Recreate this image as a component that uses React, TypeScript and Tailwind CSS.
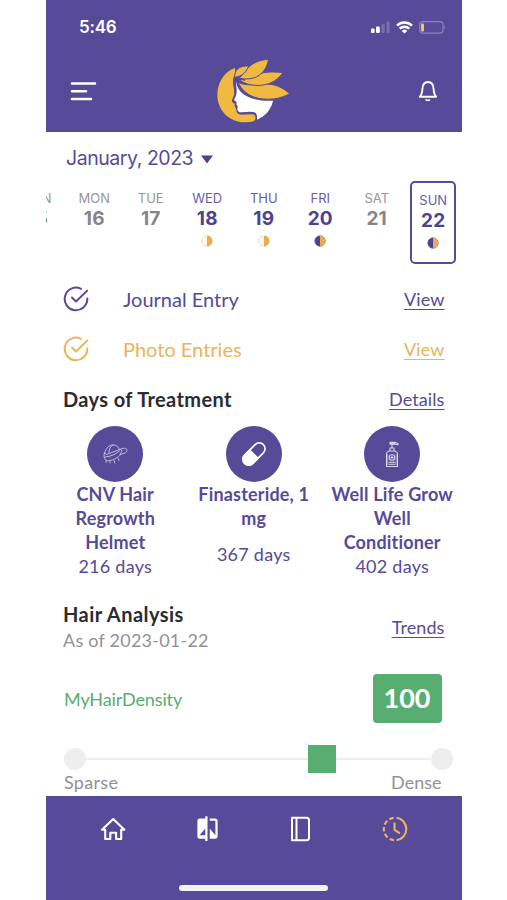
import { MdCompare } from 'react-icons/md';
import clsx from 'clsx';

type Moon = 'half' | 'full';

interface Day {
  name: string;
  date: number;
  moon?: Moon;
  selected?: boolean;
}

const days: Day[] = [
  { name: 'SUN', date: 15 },
  { name: 'MON', date: 16 },
  { name: 'TUE', date: 17 },
  { name: 'WED', date: 18, moon: 'half' },
  { name: 'THU', date: 19, moon: 'half' },
  { name: 'FRI', date: 20, moon: 'full' },
  { name: 'SAT', date: 21 },
  { name: 'SUN', date: 22, moon: 'full', selected: true },
];

function StatusBar() {
  return (
    <div className="flex h-[54px] items-center justify-between pl-[33px] pr-[16px]">
      <span className="font-['Inter',sans-serif] text-[17px] font-semibold leading-none tracking-[-0.2px]">5:46</span>
      <div className="flex items-center gap-[6px]">
        <svg width="19" height="12" viewBox="0 0 19 12" fill="white">
          <rect x="0" y="7.5" width="3.6" height="4.5" rx="1" />
          <rect x="5" y="5.5" width="3.8" height="6.5" rx="1" />
          <rect x="10.5" y="3" width="3.2" height="9" rx="1" opacity="0.2" />
          <rect x="15.5" y="0.5" width="3.2" height="11.5" rx="1" opacity="0.2" />
        </svg>
        <svg width="17" height="13" viewBox="0 0 17 13" fill="none" stroke="white" strokeWidth="2.4">
          <path d="M1 4.6a10.6 10.6 0 0 1 15 0" />
          <path d="M3.7 7.7a6.8 6.8 0 0 1 9.6 0" />
          <path d="M8.5 12.6 5.8 9.9a3.8 3.8 0 0 1 5.4 0z" fill="white" stroke="none" />
        </svg>
        <svg width="27" height="13" viewBox="0 0 27 13" fill="none">
          <rect x="0.6" y="0.6" width="23.4" height="11.6" rx="3" stroke="#8d80bd" strokeWidth="1.2" />
          <rect x="2" y="2.4" width="3" height="8" rx="1" fill="#f3cb4f" />
          <path d="M25.2 4.5q2 2 0 4z" fill="#8d80bd" />
        </svg>
      </div>
    </div>
  );
}

function Logo() {
  return (
    <svg width="90" height="80" viewBox="0 0 270 240">
      <path
        fill="#f0b940"
        d="M75 54C40 66 22 101 22 135c0 46 37 82 81 82 12 0 21-1 29-4 6-4 6-14 1-19-11-3-26 0-40 0-12-1-14-8-14-16l-5-9 0-8c-8-3-10-7-7-13l5-13c3-16-4-28-3-43 0-13 10-17 6-38z"
      />
      <path
        fill="#fff"
        d="M77 93c2 16 5 32 1 44l-6 13 8 6-1 7 4 6-1 7c1 8 5 11 12 11 15-1 28-4 39 0 8 3 9 13 8 22 25-10 43-32 48-57-36 2-76-5-97-27-10-11-12-22-15-32z"
      />
      <g fill="#f0b940" stroke="#574a98" strokeWidth="3" strokeLinejoin="round">
        <path d="M84 97c26 12 47 6 78 5 35-1 58 12 77 29-27 16-62 20-93 14-33-7-52-26-62-48z" />
        <path d="M88 90c35-2 52-32 131-22-19 28-52 41-84 38-19-2-33-6-47-16z" />
        <path d="M88 84c20-19 29-52 88-56-6 32-27 56-57 58-12 1-22 2-31-2z" />
        <path d="M74 82c-1-22 14-36 42-34-6 17-18 31-42 34z" />
      </g>
      <path fill="none" stroke="#574a98" strokeWidth="3.5" strokeLinecap="round" d="M73 85c12-3 20 0 30 6M74 90c8 3 14 4 20 7" />
    </svg>
  );
}

function Header() {
  return (
    <header className="h-[132px] shrink-0 bg-[#574a98] text-white">
      <StatusBar />
      <div className="-mt-1 flex items-start justify-between pl-6 pr-[23px]">
        <svg className="mt-8" width="27" height="20" viewBox="0 0 27 20" stroke="white" strokeWidth="2.5" strokeLinecap="round">
          <path d="M2 1.6h23M2 9.2h14M2 17.1h19" />
        </svg>
        <div className="-ml-[3px]">
          <Logo />
        </div>
        <svg className="mt-[30px]" width="22" height="23" viewBox="0 0 22 23" fill="none" stroke="white" strokeWidth="1.9" strokeLinejoin="round" strokeLinecap="round">
          <path d="M2.8 16.7c2-2 2.4-4.2 2.6-7.7C5.6 4.8 7.7 2 11 2s5.4 2.8 5.6 7c.2 3.5.6 5.7 2.6 7.7z" />
          <path d="M8.9 20h4.2q-2.1 1.6-4.2 0z" fill="white" strokeWidth="1" />
        </svg>
      </div>
    </header>
  );
}

function MoonIcon({ type }: { type: Moon }) {
  return (
    <svg width="12" height="12" viewBox="0 0 12 12">
      <circle cx="6" cy="6" r="5.2" fill={type === 'full' ? '#4f4192' : '#fffaf0'} stroke={type === 'full' ? '#6c5c96' : '#f3d59f'} strokeWidth="0.8" />
      <path d="M6 .6a5.4 5.4 0 0 1 0 10.8z" fill="#e9ad51" />
    </svg>
  );
}

function Calendar() {
  return (
    <div className="font-['Inter',sans-serif]">
      <div className="flex h-[49px] items-center gap-2 pl-[20px] pt-[5px] text-[#574a98]">
        <span className="text-[19.5px] leading-none tracking-[-0.45px]">January, 2023</span>
        <svg width="12" height="9" viewBox="0 0 12 9" fill="#4f4192">
          <path d="M0 .5h12L6 8.5z" />
        </svg>
      </div>
      <div className="flex h-[84px] justify-end overflow-hidden">
        {days.map((day) => (
          <div key={day.date} className="flex w-[56.5px] shrink-0 justify-center">
            <div
              className={clsx(
                'flex flex-col items-center',
                day.selected ? 'h-[83px] w-[46px] rounded-[5px] border-2 border-[#574a98] pt-[10px]' : 'pt-[10px]',
                day.moon ? 'text-[#4f4192]' : 'text-[#858585]',
              )}
            >
              <span className="text-[13px] leading-[14px] opacity-85">{day.name}</span>
              <span className="mt-[4px] text-[19px] font-bold leading-[20px] tracking-[0.2px]">{day.date}</span>
              {day.moon && <div className="mt-[6px]"><MoonIcon type={day.moon} /></div>}
            </div>
          </div>
        ))}
      </div>
    </div>
  );
}

function Link({ children }: { children: string }) {
  return <a className="pt-px text-[18px] tracking-[0.1px] underline decoration-1 underline-offset-[3px]">{children}</a>;
}

function EntryRow({ label, className }: { label: string; className: string }) {
  return (
    <div className={clsx('flex h-[50px] items-center pl-[17px] pr-[17px]', className)}>
      <svg width="26" height="26" viewBox="0 0 26 26" fill="none" stroke="currentColor" strokeWidth="2" strokeLinecap="round" strokeLinejoin="round">
        <path d="M18 2.8A11.3 11.3 0 1 0 24.3 12.5" />
        <path d="M9 11.5l4 4L24.2 4.6" />
      </svg>
      <span className="ml-[34px] flex-1 text-[20px]">{label}</span>
      <Link>View</Link>
    </div>
  );
}

function HelmetIcon() {
  return (
    <svg width="26" height="22" viewBox="0 0 26 22" fill="none" stroke="#cdc6e4" strokeWidth="0.9" strokeLinecap="round" strokeLinejoin="round">
      <path d="M2.5 10C4 5 7 2 11 2c4 0 5.500 2 6.500 4.500M2.500 10l2 1.500 13-5 4-1.200c3-.3 4 1.200 3 3.200-1 2-4 2-6 3" />
      <path d="M2.5 10c-1 2-.5 5 1 7 2 1.500 6 .5 9-1 3-1.500 5.500-3 6-5M3.500 14c5-.5 10-2.500 14-6" />
      <path d="M7 9.5C7 6 8 3.500 11 2M19 6.500c1.500 1 1 3-.5 4" />
      <path d="M4 18v1.500M8 18.500v1.500M12 17.500l.8 2.500M16 15l1 2.500" />
    </svg>
  );
}

function PillIcon() {
  return (
    <svg width="28" height="28" viewBox="0 0 28 28">
      <g transform="rotate(45 14 14)">
        <rect x="8.2" y="0.8" width="11.6" height="26.4" rx="5.8" fill="none" stroke="white" strokeWidth="1.7" />
        <path d="M7.4 13.5h13.200v7.900a6.600 6.600 0 0 1-13.200 0z" fill="white" />
      </g>
    </svg>
  );
}

function BottleIcon() {
  return (
    <svg width="14" height="28" viewBox="0 0 14 28" fill="none" stroke="#dcd6ec" strokeWidth="1.1" strokeLinejoin="round">
      <path d="M5 2.200h5l3 1.500v1l-3-.5H5zM5 3.200h5M7 4v4M5 8h4v3H5zM4 11h6q2.500 1 2.500 3v12.500h-11V14q0-2 2.500-3z" />
      <circle cx="7" cy="17.5" r="2.8" />
      <path d="M5.500 17.500h3M7 16v3M3.500 22.300h7M3.500 24.300h7" />
      <path d="M2.700 14v11M11.200 14v11" strokeWidth="0.6" />
    </svg>
  );
}

const treatments = [
  { lines: ['CNV Hair', 'Regrowth', 'Helmet'], days: 216, icon: <HelmetIcon /> },
  { lines: ['Finasteride, 1', 'mg'], days: 367, icon: <PillIcon /> },
  { lines: ['Well Life Grow', 'Well', 'Conditioner'], days: 402, icon: <BottleIcon /> },
];

function Treatments() {
  return (
    <section className="text-[#574a98]">
      <div className="flex h-[52px] items-center justify-between px-[17px] pb-[3px]">
        <h2 className="text-[20px] font-bold tracking-[0.38px] text-[#2b2b33]">Days of Treatment</h2>
        <Link>Details</Link>
      </div>
      <div className="grid grid-cols-3">
        {treatments.map((t) => (
          <div key={t.days} className="flex flex-col items-center whitespace-nowrap text-[18px] leading-[24px]">
            <div className="flex size-[56px] items-center justify-center rounded-full bg-[#574a98]">{t.icon}</div>
            {t.lines.map((line) => (
              <span key={line} className="font-bold tracking-[0.18px]">{line}</span>
            ))}
            <span className={clsx('tracking-[0.25px]', t.lines.length === 2 && 'mt-3')}>{t.days} days</span>
          </div>
        ))}
      </div>
    </section>
  );
}

function Analysis() {
  return (
    <section className="mt-[23px]">
      <div className="flex items-center justify-between px-[17px] text-[#574a98]">
        <div>
          <h2 className="text-[20px] font-bold leading-[26px] tracking-[0.45px] text-[#2b2b33]">Hair Analysis</h2>
          <p className="text-[18px] leading-[26px] tracking-[0.23px] text-[#929292]">As of 2023-01-22</p>
        </div>
        <Link>Trends</Link>
      </div>
      <div className="mt-[21px] flex items-center justify-between pl-[18px] pr-[20px]">
        <span className="pt-px text-[18px] tracking-[-0.12px] text-[#58ae70]">MyHairDensity</span>
        <span className="flex h-[49px] w-[69px] items-center justify-center rounded-[4px] bg-[#58ae70] text-[27px] font-bold text-white">100</span>
      </div>
      <div className="mt-[22px] flex h-7 items-center pl-[18px] pr-[9px]">
        <div className="size-[22px] rounded-full bg-[#eeeeee]" />
        <div className="h-[2px] flex-1 bg-[#eeeeee]" />
        <div className="size-7 bg-[#58ae70]" />
        <div className="h-[2px] w-[95px] bg-[#eeeeee]" />
        <div className="size-[22px] rounded-full bg-[#eeeeee]" />
      </div>
      <div className="-mt-px flex justify-between pl-[18px] pr-[20px] text-[18px] leading-[20px] text-[#929292]">
        <span className="tracking-[0.3px]">Sparse</span>
        <span>Dense</span>
      </div>
    </section>
  );
}

function NavBar() {
  return (
    <nav className="flex h-[104px] shrink-0 flex-col items-center justify-between bg-[#574a98] pb-[9px] pt-[19px] text-white">
      <div className="flex w-full items-center justify-between px-[54px]">
        <svg width="26" height="26" viewBox="0 0 26 26" fill="none" stroke="currentColor" strokeWidth="2.1" strokeLinejoin="round">
          <path d="M2 13.8 13.2 3l11.200 10.800h-3.200v9.200h-5.100v-6.300h-5.800v6.300H5.200v-9.200z" />
        </svg>
        <MdCompare size={27} />
        <svg width="26" height="26" viewBox="0 0 26 26" fill="none" stroke="currentColor" strokeWidth="2" strokeLinejoin="round">
          <path d="M4 1.800h14.500q2.500 0 2.500 2.500v17.400q0 2.500-2.500 2.500H4zM8.500 1.800v22.400" />
        </svg>
        <svg width="26" height="26" viewBox="0 0 26 26" fill="none" stroke="#eab263" strokeWidth="2.1">
          <path d="M14.500 1.800a11.300 11.300 0 0 1 0 22.400" />
          <circle cx="13" cy="13" r="11.2" pathLength="100" strokeDasharray="6.5 3.5 6.5 3.5 6.5 3.5 6.5 3.5 6.5 53.5" strokeDashoffset="-26.5" />
          <path d="M12.500 6.500V14l5.500 3.300" />
        </svg>
      </div>
      <div className="h-[6px] w-[149px] rounded-full bg-[#f4f2f8]" />
    </nav>
  );
}

export default function App() {
  return (
    <div className="h-[900px] w-[507px] bg-white pl-[46px]">
      <div className="flex h-full w-[415.5px] flex-col overflow-hidden font-['Lato',sans-serif] [font-variant-ligatures:none]">
        <Header />
        <main className="flex-1">
          <Calendar />
          <div className="pt-[9px]">
            <EntryRow label="Journal Entry" className="text-[#574a98]" />
            <EntryRow label="Photo Entries" className="text-[#eab35c]" />
          </div>
          <Treatments />
          <Analysis />
        </main>
        <NavBar />
      </div>
    </div>
  );
}
